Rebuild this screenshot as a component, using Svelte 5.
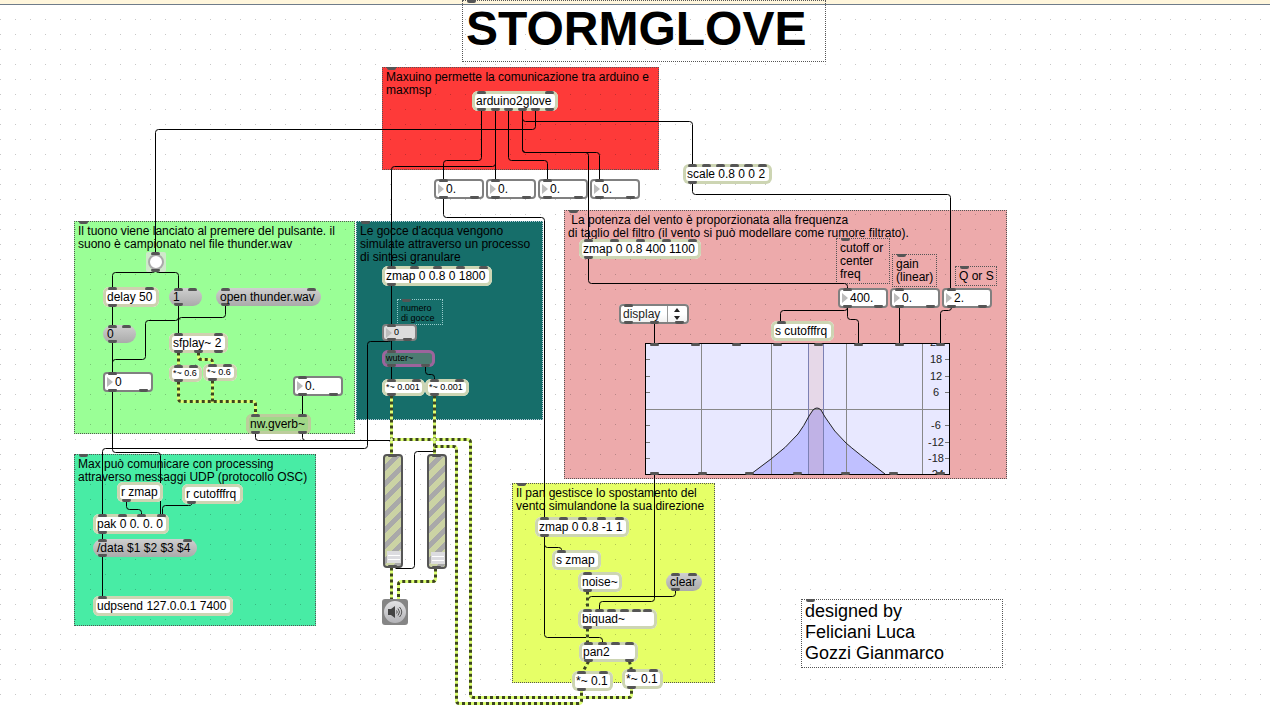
<script>
  // Comment panels: coloured sections and plain notes
  const panels = [
    { x: 382, y: 67, w: 277, h: 103, color: '#fe3a39', text: 'Maxuino permette la comunicazione tra arduino e\nmaxmsp' },
    { x: 564, y: 210, w: 443, h: 269, color: '#edaaab', text: ' La potenza del vento è proporzionata alla frequenza\ndi taglio del filtro (il vento si può modellare come rumore filtrato).' },
    { x: 74, y: 221, w: 281, h: 213, color: '#9aff96', text: 'Il tuono viene lanciato al premere del pulsante. il\nsuono è campionato nel file thunder.wav' },
    { x: 74, y: 454, w: 242, h: 172, color: '#48eca5', text: 'Max può comunicare con processing\nattraverso messaggi UDP (protocollo OSC)' },
    { x: 512, y: 483, w: 203, h: 200, color: '#e6ff67', text: 'Il pan gestisce lo spostamento del\nvento simulandone la sua direzione' },
    { x: 356, y: 221, w: 187, h: 199, color: '#166e6a', solid: true, text: "Le gocce d'acqua vengono\nsimulate attraverso un processo\ndi sintesi granulare" }
  ];
  const notes = [
    { x: 836, y: 238, w: 54, h: 46, text: 'cutoff or\ncenter\nfreq' },
    { x: 892, y: 254, w: 45, h: 33, text: 'gain\n(linear)' },
    { x: 955, y: 266, w: 42, h: 20, text: 'Q or S' },
    { x: 397, y: 299, w: 46, h: 26, size: 'small', text: 'numero\ndi gocce' },
    { x: 801, y: 599, w: 202, h: 69, size: 'large', text: 'designed by\nFeliciani Luca\nGozzi Gianmarco' }
  ];

  // Object boxes; ins and outs are the port centres on the canvas
  const objects = [
    { x: 472, y: 91, w: 86, h: 20, text: 'arduino2glove', ins: [481, 549], outs: [481, 495, 508, 522, 535, 549] },
    { x: 683, y: 164, w: 89, h: 20, text: 'scale 0.8 0 0 2', ins: [692, 706, 720, 734, 748, 762], outs: [692] },
    { x: 103, y: 287, w: 56, h: 20, text: 'delay 50', ins: [112, 149], outs: [112], tone: 'warm' },
    { x: 169, y: 333, w: 59, h: 20, text: 'sfplay~ 2', ins: [178, 218], outs: [178, 198, 218], tone: 'warm' },
    { x: 169, y: 365, w: 33, h: 17, text: '*~ 0.6', ins: [178, 193], outs: [178], tone: 'warm', small: true },
    { x: 203, y: 364, w: 34, h: 17, text: '*~ 0.6', ins: [212, 227], outs: [212], tone: 'warm', small: true },
    { x: 246, y: 414, w: 65, h: 20, text: 'nw.gverb~', ins: [255, 302], outs: [255, 302], tone: 'green' },
    { x: 382, y: 266, w: 110, h: 20, text: 'zmap 0 0.8 0 1800', ins: [391, 414, 437, 460, 483], outs: [391] },
    { x: 382, y: 350, w: 53, h: 17, text: 'wuter~', ins: [391], outs: [391, 425], tone: 'violet', small: true },
    { x: 382, y: 379, w: 43, h: 17, text: '*~ 0.001', ins: [391, 416], outs: [391], small: true },
    { x: 425, y: 379, w: 44, h: 17, text: '*~ 0.001', ins: [434, 459], outs: [434], small: true },
    { x: 579, y: 239, w: 122, h: 20, text: 'zmap 0 0.8 400 1100', ins: [588, 614, 640, 666, 692], outs: [588] },
    { x: 771, y: 321, w: 63, h: 20, text: 's cutofffrq', ins: [781], outs: [] },
    { x: 117, y: 482, w: 46, h: 20, text: 'r zmap', ins: [], outs: [126] },
    { x: 182, y: 484, w: 61, h: 20, text: 'r cutofffrq', ins: [], outs: [191] },
    { x: 93, y: 514, w: 76, h: 20, text: 'pak 0 0. 0. 0', ins: [102, 122, 141, 161], outs: [102] },
    { x: 93, y: 596, w: 140, h: 20, text: 'udpsend 127.0.0.1 7400', ins: [102], outs: [] },
    { x: 535, y: 517, w: 94, h: 20, text: 'zmap 0 0.8 -1 1', ins: [544, 563, 582, 601, 619], outs: [544] },
    { x: 552, y: 550, w: 49, h: 20, text: 's zmap', ins: [561], outs: [] },
    { x: 578, y: 572, w: 44, h: 20, text: 'noise~', ins: [587], outs: [587] },
    { x: 578, y: 609, w: 79, h: 20, text: 'biquad~', ins: [587, 599, 611, 624, 636, 647], outs: [587] },
    { x: 579, y: 642, w: 59, h: 20, text: 'pan2', ins: [588, 602, 615, 629], outs: [588, 629] },
    { x: 572, y: 671, w: 41, h: 20, text: '*~ 0.1', ins: [581, 603], outs: [581] },
    { x: 622, y: 669, w: 41, h: 20, text: '*~ 0.1', ins: [631, 653], outs: [631] }
  ];
  const messages = [
    { x: 169, y: 288, w: 33, h: 18, text: '1', ins: [178, 192], outs: [178] },
    { x: 216, y: 288, w: 105, h: 18, text: 'open thunder.wav', ins: [225, 311], outs: [225] },
    { x: 103, y: 325, w: 33, h: 18, text: '0', ins: [112, 126], outs: [112] },
    { x: 93, y: 539, w: 104, h: 18, text: '/data $1 $2 $3 $4', ins: [102, 187], outs: [102] },
    { x: 666, y: 573, w: 36, h: 18, text: 'clear', ins: [675, 692], outs: [675] }
  ];
  const box = (x, y, value, label) => ({ x, y, w: 50, h: 20, value, label, ins: [x + 9], outs: [x + 9, x + 40] });
  const numbers = [
    box(434, 179, '0.', 'Glove sensor 1'),
    box(486, 179, '0.', 'Glove sensor 2'),
    box(538, 179, '0.', 'Glove sensor 3'),
    box(590, 179, '0.', 'Glove sensor 4'),
    box(103, 372, '0', 'Thunder state'),
    box(293, 376, '0.', 'Reverb amount'),
    box(838, 288, '400.', 'Cutoff or center frequency'),
    box(890, 288, '0.', 'Gain'),
    box(942, 288, '2.', 'Q or S'),
    { x: 382, y: 324, w: 35, h: 17, value: '0', label: 'Numero di gocce', ins: [391], outs: [391, 407], small: true }
  ];
  const faders = [
    { x: 383, y: 454, w: 20, h: 114, label: 'Left gain' },
    { x: 427, y: 454, w: 20, h: 115, label: 'Right gain' }
  ];

  // Patch cords as corner points
  const cords = [
    [[481, 110], [481, 160], [443, 160], [443, 180]],
    [[495, 110], [495, 180]],
    [[495, 158], [495, 166], [391, 166], [391, 267]],
    [[508, 110], [508, 160], [547, 160], [547, 180]],
    [[522, 110], [522, 152], [599, 152], [599, 180]],
    [[522, 140], [522, 152], [588, 152], [588, 240]],
    [[522, 110], [522, 121], [692, 121], [692, 165]],
    [[535, 110], [535, 129], [155, 129], [155, 254]],
    [[692, 183], [692, 194], [950, 194], [950, 289]],
    [[443, 198], [443, 217], [544, 217], [544, 518]],
    [[155, 262], [155, 272], [112, 272], [112, 288]],
    [[155, 262], [155, 272], [178, 272], [178, 289]],
    [[178, 305], [178, 334]],
    [[225, 305], [225, 317], [178, 317], [178, 334]],
    [[178, 305], [178, 320], [145, 320], [145, 359], [112, 359], [112, 373]],
    [[112, 306], [112, 326]],
    [[112, 342], [112, 373]],
    [[112, 391], [112, 452], [160, 452], [160, 515]],
    [[302, 395], [302, 415]],
    [[255, 433], [255, 440], [391, 440], [391, 455]],
    [[302, 433], [302, 440], [391, 440]],
    [[391, 285], [391, 325]],
    [[391, 340], [391, 351]],
    [[391, 337], [391, 341], [367, 341], [367, 448], [102, 448], [102, 515]],
    [[391, 366], [391, 380]],
    [[425, 366], [425, 374], [434, 374], [434, 380]],
    [[395, 568], [414, 568], [414, 451], [435, 451]],
    [[126, 501], [126, 509], [141, 509], [141, 515]],
    [[191, 503], [191, 505], [162, 505], [162, 515]],
    [[102, 533], [102, 540]],
    [[102, 556], [102, 597]],
    [[588, 258], [588, 283], [847, 283], [847, 289]],
    [[654, 323], [654, 344]],
    [[847, 304], [847, 310], [780, 310], [780, 322]],
    [[847, 307], [847, 319], [858, 319], [858, 344]],
    [[899, 307], [899, 344]],
    [[951, 304], [951, 310], [940, 310], [940, 344]],
    [[654, 474], [654, 601], [599, 601], [599, 610]],
    [[544, 536], [544, 547], [561, 547], [561, 551]],
    [[544, 536], [544, 637], [602, 637], [602, 643]],
    [[675, 590], [675, 596], [588, 596], [588, 610]]
  ];
  const signals = [
    [[178, 352], [178, 366]],
    [[198, 352], [198, 359], [212, 359], [212, 365]],
    [[178, 381], [178, 401], [255, 401], [255, 415]],
    [[212, 380], [212, 401]],
    [[391, 395], [391, 455]],
    [[434, 395], [434, 455]],
    [[391, 567], [391, 600]],
    [[435, 568], [435, 581], [398, 581], [398, 600]],
    [[391, 439], [470, 439], [470, 697], [631, 697], [631, 688]],
    [[434, 446], [456, 446], [456, 703], [581, 703], [581, 690]],
    [[587, 591], [587, 610]],
    [[587, 628], [587, 643]],
    [[588, 661], [582, 672]],
    [[629, 661], [631, 670]]
  ];

  // Turns corner points into a path with softened bends
  function route(points) {
    const p = points.map(([x, y]) => [x + 0.5, y + 0.5]);
    let d = `M${p[0]}`;
    for (let i = 1; i < p.length - 1; i++) {
      const toward = (q) => {
        const dx = q[0] - p[i][0];
        const dy = q[1] - p[i][1];
        const len = Math.hypot(dx, dy) || 1;
        const r = Math.min(3, len / 2);
        return [p[i][0] + (dx / len) * r, p[i][1] + (dy / len) * r];
      };
      d += `L${toward(p[i - 1])}Q${p[i]} ${toward(p[i + 1])}`;
    }
    return d + `L${p[p.length - 1]}`;
  }

  const place = (n) => `left:${n.x}px;top:${n.y}px;width:${n.w}px;height:${n.h}px`;

  const graph = { x: 645, y: 343, w: 305, h: 132 };
  graph.ins = [654, 695, 736, 777, 818, 858, 899, 940];
  graph.outs = [654, 702, 749, 797, 845, 893, 940];
  const scale = [[24, -1], [18, 16], [12, 33], [6, 49], [-6, 82], [-12, 99], [-18, 115], [-24, 131]];
  const curve = 'M106 131L126 116Q141 105 153 91Q159 83 164 73L168 67Q172 63 176 67L180 74Q189 89 201 100Q210 108 240 131';
</script>

{#snippet ports(n)}
  {#each n.ins ?? [] as px}<i class="port in" style="left:{px - n.x - 4}px"></i>{/each}
  {#each n.outs ?? [] as px}<i class="port out" style="left:{px - n.x - 4}px"></i>{/each}
{/snippet}

<main class="patcher">
  <div class="strip"></div>

  {#each panels as p}
    <section class="comment" class:solid={p.solid} style="{place(p)};background-color:{p.color}">
      <i class="port tag"></i>
      <p>{p.text}</p>
    </section>
  {/each}

  <svg class="layer grid" aria-hidden="true">
    <defs>
      <pattern id="dots" x="0" y="4" width="15" height="15" patternUnits="userSpaceOnUse">
        <rect x="0" y="0" width="1" height="1" fill="#000" fill-opacity="0.22" />
      </pattern>
    </defs>
    <rect y="15" width="100%" height="100%" fill="url(#dots)" />
  </svg>

  <header class="comment title" style="left:462px;top:0px;width:364px;height:62px">
    <i class="port tag"></i>
    <h1>STORMGLOVE</h1>
  </header>

  {#each notes as n}
    <div class="comment note {n.size ?? ''}" style={place(n)}>
      <i class="port tag"></i>
      <p>{n.text}</p>
    </div>
  {/each}

  <svg class="layer cords" aria-hidden="true">
    {#each cords as c}<path class="cord" d={route(c)} />{/each}
    {#each signals as s}
      <path class="signal" d={route(s)} />
      <path class="signal dashes" d={route(s)} />
    {/each}
    <circle cx="391.5" cy="439.5" r="1.5" fill="#e8ffae" />
    <circle cx="434.5" cy="439.5" r="1.5" fill="#e8ffae" />
  </svg>

  {#each objects as o}
    <div class="node object {o.tone ?? ''}" class:small={o.small} style={place(o)}>
      <span>{o.text}</span>
      {@render ports(o)}
    </div>
  {/each}

  {#each messages as m}
    <button class="node message" style={place(m)}>
      <span>{m.text}</span>
      {@render ports(m)}
    </button>
  {/each}

  {#each numbers as n}
    <label class="node number" class:small={n.small} style={place(n)}>
      <svg width="6" height="10" viewBox="0 0 6 10" aria-hidden="true"><path d="M0 0L6 5L0 10Z" fill="#bcbcbc" /></svg>
      <input type="text" aria-label={n.label} value={n.value} />
      {@render ports(n)}
    </label>
  {/each}

  <button class="node bang" aria-label="Bang" style="left:146px;top:252px;width:20px;height:20px">
    <svg width="20" height="20" viewBox="0 0 20 20" aria-hidden="true"><circle cx="10" cy="10" r="7" fill="#fff" stroke="#aaa" stroke-width="2" /></svg>
    {@render ports({ x: 146, ins: [155], outs: [155] })}
  </button>

  <div class="node menu" style="left:619px;top:304px;width:70px;height:20px">
    <select aria-label="Filter type"><option>display</option></select>
    <svg width="20" height="16" viewBox="0 0 20 16" aria-hidden="true">
      <path d="M0.5 0V16" stroke="#999" />
      <path d="M7 6L10 2L13 6ZM7 10L10 14L13 10Z" fill="#222" />
    </svg>
    {@render ports({ x: 619, ins: [628], outs: [628, 654, 679] })}
  </div>

  <figure class="node graph" aria-label="Filter response" style={place(graph)}>
    <svg width="305" height="132" viewBox="0 0 305 132">
      <defs>
        <clipPath id="band"><rect x="163" width="15" height="132" /></clipPath>
      </defs>
      <rect width="305" height="132" fill="#e8e8ff" />
      <rect x="163" width="15" height="132" fill="#e6d8e8" />
      <path d="{curve}Z" fill="#c0c0ff" />
      <path d="{curve}Z" fill="#c0b2e6" clip-path="url(#band)" />
      <path d="M56.5 0V132M126.5 0V132M201.5 0V132M277.5 0V132M0 66.5H305" stroke="#888" />
      <path d="M163.5 0V132M178.5 0V132" stroke="#7c80b4" />
      <path d={curve} fill="none" stroke="#222" />
      {#each scale as [db, y]}
        <path d="M0 {y + 0.5}H5M300 {y + 0.5}H305" stroke="#777" />
        <text x="291" y={y + 4} text-anchor="middle">{db}</text>
      {/each}
      <rect x="0.5" y="0.5" width="304" height="131" fill="none" stroke="#000" />
    </svg>
    {@render ports(graph)}
  </figure>

  {#each faders as f}
    <div class="node fader" style={place(f)}>
      <input type="range" min="0" max="157" value="0" aria-label={f.label} />
      {@render ports({ x: f.x, ins: [f.x + 9], outs: [f.x + 9] })}
    </div>
  {/each}

  <button class="node dsp" aria-label="Audio on or off" style="left:382px;top:599px;width:26px;height:26px">
    <svg width="26" height="26" viewBox="0 0 26 26" aria-hidden="true">
      <defs>
        <linearGradient id="knob" x1="0" y1="0" x2="0" y2="1"><stop offset="0" stop-color="#e2e2e4" /><stop offset="1" stop-color="#b4b4b8" /></linearGradient>
      </defs>
      <circle cx="13" cy="13" r="11" fill="url(#knob)" />
      <path d="M6 10H9L13 7V19L9 16H6Z" fill="#444" />
      <path d="M14.500 11.500Q16 13 14.500 14.500M16 9.500Q19 13 16 16.500M17.500 8Q22 13 17.500 18" fill="none" stroke="#555" />
    </svg>
  </button>
</main>

<style>
  :global(body) {
    background: #fff;
  }

  .patcher {
    position: relative;
    min-height: 100vh;
    overflow: hidden;
    color: #000;
    font: 12px/13px 'Liberation Sans', Arial, sans-serif;
  }

  .patcher * {
    box-sizing: border-box;
  }

  .strip {
    height: 5px;
    background: #fff6dc;
    border-bottom: 1px solid #6f7c8a;
  }

  .layer {
    position: absolute;
    inset: 0;
    width: 100%;
    height: 100%;
    pointer-events: none;
  }

  .comment {
    position: absolute;
    padding: 3px;
    border: 1px dotted #555;
  }

  .comment p,
  .comment h1 {
    margin: 0;
    white-space: pre;
  }

  .comment h1 {
    font-size: 48px;
    line-height: 50px;
  }

  .solid {
    z-index: 1;
    border-color: #bcd;
  }

  .layer.cords,
  .note {
    z-index: 2;
  }

  .note.small {
    font-size: 9px;
    line-height: 10px;
    border-color: #9cc;
  }

  .note.large {
    padding: 1px 3px;
    font-size: 18px;
    line-height: 21px;
  }

  .cord {
    fill: none;
    stroke: #000;
    stroke-width: 1;
  }

  .signal {
    fill: none;
    stroke: #dcff73;
    stroke-width: 3;
  }

  .dashes {
    stroke: #3d4420;
    stroke-dasharray: 3 3;
  }

  .node {
    position: absolute;
    z-index: 3;
    display: flex;
    align-items: center;
    margin: 0;
    padding: 0;
    border: 0;
    color: #000;
    font: inherit;
    white-space: pre;
  }

  .object {
    --edge: #cdd5b3;
    padding-left: 4px;
    border-radius: 6px;
    background: #fff;
    box-shadow: inset 0 0 0 3px var(--edge);
  }

  .object span,
  .message span {
    position: relative;
    z-index: 1;
  }

  .object.warm {
    --edge: #cfd0b0;
  }

  .object.green {
    --edge: #bccd9c;
    background: #a0d888;
  }

  .object.violet {
    --edge: #9c649c;
    background: #4c7c72;
  }

  .node.small {
    font-size: 9px;
  }

  .message {
    padding-left: 4px;
    border-radius: 9px;
    background: linear-gradient(#cfcfcf, #aaa);
  }

  .number {
    gap: 2px;
    padding-left: 2px;
    border: 2px solid #808080;
    border-radius: 4px;
    background: #fff;
  }

  .number.small {
    background: #ddd;
  }

  .number svg {
    flex: none;
  }

  .number input {
    flex: 1;
    min-width: 0;
    margin: 0;
    padding: 0;
    border: 0;
    outline: 0;
    background: transparent;
    color: #000;
    font: inherit;
  }

  .number .port {
    margin-left: -2px;
  }

  .number .in {
    top: -2px;
  }

  .number .out {
    bottom: -2px;
  }

  .port {
    position: absolute;
    width: 9px;
    height: 3px;
    background: #555;
  }

  .in {
    top: 0;
    border-radius: 2px 2px 1px 1px;
  }

  .out {
    bottom: 0;
    border-radius: 1px 1px 2px 2px;
  }

  .tag {
    top: -1px;
    left: 4px;
    border-radius: 0 0 2px 2px;
  }

  .bang {
    border-radius: 2px;
    background: #cfe8cb;
  }

  .menu {
    padding: 2px;
    border-radius: 4px;
    background: linear-gradient(#fff 50%, #eee);
    box-shadow: inset 0 0 0 2px #808080;
  }

  .menu select {
    flex: 1;
    min-width: 0;
    padding: 0 0 0 2px;
    border: 0;
    appearance: none;
    background: transparent;
    color: #222;
    font: inherit;
  }

  .graph text {
    font-size: 11px;
    fill: #222;
  }

  .fader {
    border: 2px solid #555;
    border-radius: 4px;
    background: repeating-linear-gradient(135deg, #cbd3a4 0 6px, #a9a9a9 6px 11px);
  }

  .fader input {
    width: 16px;
    height: 100%;
    margin: 0;
    padding-bottom: 3px;
    appearance: none;
    background: transparent;
    writing-mode: vertical-lr;
    direction: rtl;
  }

  .fader input::-webkit-slider-thumb {
    width: 14px;
    height: 12px;
    margin-left: 1px;
    appearance: none;
    border: 1px solid #ddd;
    background: repeating-linear-gradient(#dcdce0 0 3px, #fff 3px 4px);
  }

  .fader .port {
    margin-left: -2px;
  }

  .fader .in {
    top: -2px;
  }

  .fader .out {
    bottom: -2px;
  }

  .dsp {
    border-radius: 3px;
    background: #858585;
  }
</style>
